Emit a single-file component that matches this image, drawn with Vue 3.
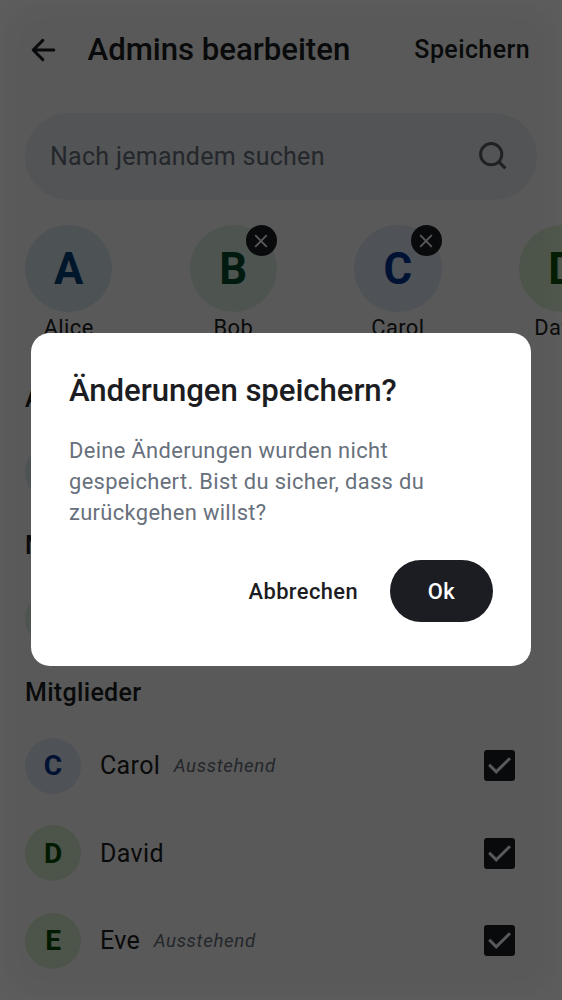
<script setup>
const selected = [
  { name: 'Alice', tone: 'blue', removable: false },
  { name: 'Bob', tone: 'mint', removable: true },
  { name: 'Carol', tone: 'indigo', removable: true },
  { name: 'David', tone: 'green', removable: false },
]
const groups = [
  { title: 'Admins', people: [{ name: 'Alice', tone: 'cyan' }] },
  { title: 'Moderatoren', people: [{ name: 'Bob', tone: 'mint' }] },
  {
    title: 'Mitglieder',
    people: [
      { name: 'Carol', tone: 'indigo', pending: true, checked: true },
      { name: 'David', tone: 'green', checked: true },
      { name: 'Eve', tone: 'green', pending: true, checked: true },
    ],
  },
]
</script>

<template>
  <div class="screen">
    <header class="bar">
      <svg class="back" viewBox="0 0 26 24" fill="none">
        <path d="M22.8 12H2.5M11.8 2.4L2.2 12L11.8 21.6" />
      </svg>
      <h1>Admins bearbeiten</h1>
      <span class="save">Speichern</span>
    </header>

    <div class="search">
      <span>Nach jemandem suchen</span>
      <svg viewBox="0 0 30 30" fill="none">
        <circle cx="13.2" cy="13.2" r="10.6" />
        <path d="M20.6 20.6L27.4 27.4" />
      </svg>
    </div>

    <div class="strip">
      <div v-for="p in selected" :key="p.name" class="chip">
        <div class="avatar large" :class="p.tone">
          {{ p.name[0] }}
          <span v-if="p.removable" class="remove">
            <svg viewBox="0 0 14 14"><path d="M1.2 1.2L12.8 12.8M12.8 1.2L1.2 12.8" /></svg>
          </span>
        </div>
        <span class="chip-name">{{ p.name }}</span>
      </div>
    </div>

    <section v-for="g in groups" :key="g.title">
      <h2>{{ g.title }}</h2>
      <div v-for="p in g.people" :key="p.name" class="row">
        <div class="avatar" :class="p.tone">{{ p.name[0] }}</div>
        <span class="name">{{ p.name }}</span>
        <em v-if="p.pending">Ausstehend</em>
        <span v-if="p.checked" class="check">
          <svg viewBox="0 0 31 31" fill="none"><path d="M5.2 14.8L12.2 21.8L26 8.2" /></svg>
        </span>
      </div>
    </section>

    <div class="overlay">
      <div class="dialog">
        <h3>Änderungen speichern?</h3>
        <p>Deine Änderungen wurden nicht gespeichert. Bist du sicher, dass du zurückgehen willst?</p>
        <div class="actions">
          <button class="cancel">Abbrechen</button>
          <button class="ok">Ok</button>
        </div>
      </div>
    </div>
  </div>
</template>

<style scoped>
.screen {
  position: relative;
  width: 562px;
  height: 1000px;
  overflow: hidden;
  background: #fff;
  color: #1c1d22;
  font-family: Roboto, sans-serif;
}
h1, h2, h3, p { margin: 0; font-weight: 500; }
.bar {
  display: flex;
  align-items: center;
  height: 100px;
  padding: 0 32px 0 31px;
}
.back { width: 26px; height: 24px; margin-right: 30.5px; }
.back path { stroke: #1c1d22; stroke-width: 3; stroke-linecap: round; stroke-linejoin: round; }
h1 { flex: 1; font-size: 31.2px; line-height: 40px; letter-spacing: -0.03px; white-space: nowrap; }
.save { font-size: 25px; font-weight: 500; line-height: 30px; letter-spacing: 0.4px; }
.search {
  display: flex;
  align-items: center;
  justify-content: space-between;
  height: 87px;
  margin: 13px 25px 0;
  padding: 0 29px 0 25px;
  box-sizing: border-box;
  border-radius: 44px;
  background: #edf0f4;
  color: #68707c;
  font-size: 25px;
  letter-spacing: 0.28px;
}
.search svg { width: 30px; height: 30px; margin-top: -2px; }
.search svg * { stroke: #5c5f66; stroke-width: 3; }
.strip { display: flex; gap: 77.2px; margin: 25px 0 0 25px; height: 154px; }
.chip { display: flex; flex-direction: column; align-items: center; width: 87.4px; flex: none; }
.chip-name { margin-top: 2px; font-size: 21.9px; line-height: 28px; letter-spacing: 0.4px; }
.avatar {
  position: relative;
  display: flex;
  align-items: center;
  justify-content: center;
  flex: none;
  width: 56px;
  height: 56px;
  border-radius: 50%;
  font-size: 28px;
  font-weight: 700;
}
.avatar.large { width: 87.4px; height: 87.4px; font-size: 43.7px; }
.blue { background: #dcebf4; color: #003f7c; }
.cyan { background: #dceef2; color: #003f7c; }
.mint { background: #e0f2e6; color: #004a2b; }
.indigo { background: #e2eaf8; color: #003496; }
.green { background: #dcf0d4; color: #004a00; }
.remove {
  position: absolute;
  top: 0;
  right: 0;
  display: flex;
  align-items: center;
  justify-content: center;
  width: 31px;
  height: 31px;
  border-radius: 50%;
  background: #1c1d22;
}
.remove svg { width: 14px; height: 14px; }
.remove path { stroke: #fff; stroke-width: 1.9; }
section { height: 147px; }
h2 { margin-left: 25px; height: 40px; font-size: 25px; line-height: 40px; letter-spacing: 0.32px; }
.row { display: flex; align-items: center; height: 87.5px; margin: 0 47px 0 25px; }
h2 + .row { margin-top: 9px; }
.name { margin-left: 19px; font-size: 25px; letter-spacing: 0.35px; }
em { margin-left: 13.5px; font-size: 18.7px; letter-spacing: 0.63px; color: #68707c; }
.check { width: 31px; height: 31px; margin-left: auto; border-radius: 3px; background: #1c1d22; }
.check svg { display: block; width: 31px; height: 31px; }
.check path { stroke: #fff; stroke-width: 3; }
.overlay {
  position: absolute;
  inset: 0;
  display: flex;
  align-items: center;
  justify-content: center;
  padding-bottom: 1px;
  background: rgba(0, 0, 0, 0.65);
  box-shadow: inset 0 0 40px rgba(255, 255, 255, 0.045);
}
.dialog {
  width: 500px;
  height: 333px;
  padding: 37.5px 38px 0;
  box-sizing: border-box;
  border-radius: 19px;
  background: #fff;
}
h3 { font-size: 31.2px; line-height: 40px; letter-spacing: -0.08px; white-space: nowrap; }
p { margin-top: 24px; font-size: 21.9px; font-weight: 400; line-height: 31.2px; letter-spacing: 0.34px; color: #68707c; }
.actions { display: flex; justify-content: flex-end; align-items: center; gap: 32px; margin-top: 32px; }
button { padding: 0; border: 0; background: none; font: 500 21.9px Roboto, sans-serif; letter-spacing: 0.4px; color: #1c1d22; }
.ok { width: 103px; height: 62px; border-radius: 31px; background: #1c1d22; color: #fff; }
</style>
